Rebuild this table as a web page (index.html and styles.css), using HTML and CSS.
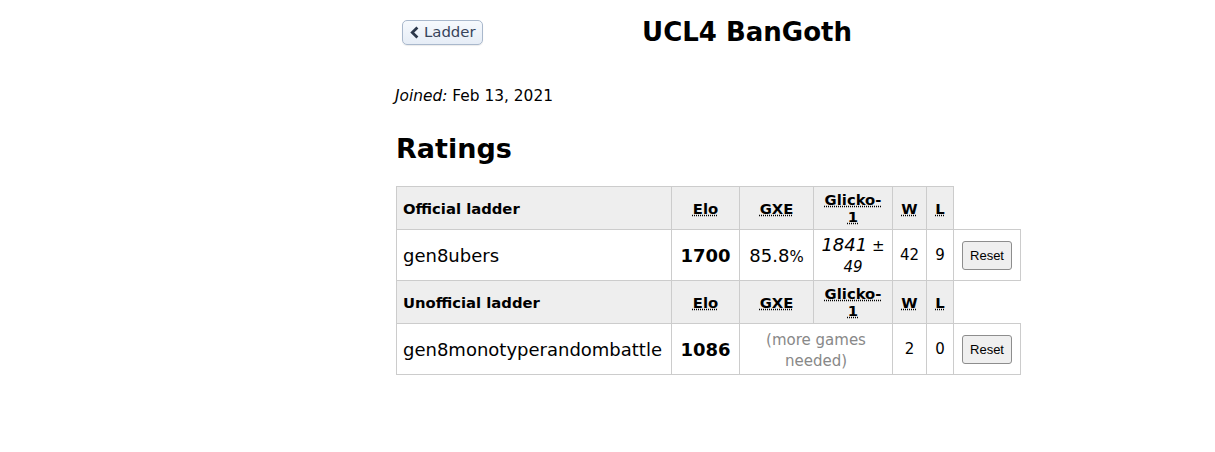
FILE: index.html
```html
<!DOCTYPE html>
<html lang="en">
<head>
<meta charset="utf-8">
<title>UCL4 BanGoth</title>
<link rel="stylesheet" href="styles.css">
</head>
<body>
<div class="page">
  <div class="topbar">
    <div class="topbar-left">
      <button class="back-btn" type="button"><svg class="chev" width="10" height="13" viewBox="0 0 10 13"><path d="M7.4 0.4 L9.4 2.4 L5.2 6.5 L9.4 10.6 L7.4 12.6 L1.3 6.5 Z" fill="#2b374a"/></svg><span>Ladder</span></button>
    </div>
    <h1 class="title">UCL4 BanGoth</h1>
    <div class="topbar-right"></div>
  </div>
  <p class="joined"><em>Joined:</em> Feb 13, 2021</p>
  <h2 class="section">Ratings</h2>
  <table class="ratings">
    <colgroup>
      <col class="c-name"><col class="c-elo"><col class="c-gxe"><col class="c-glicko"><col class="c-w"><col class="c-l"><col class="c-reset">
    </colgroup>
    <tr class="hdr">
      <th class="name">Official ladder</th>
      <th><abbr title="Elo rating">Elo</abbr></th>
      <th><abbr title="user's percentage chance of winning a random battle">GXE</abbr></th>
      <th><abbr title="Glicko-1 rating: rating±deviation">Glicko-1</abbr></th>
      <th><abbr title="Wins">W</abbr></th>
      <th><abbr title="Losses">L</abbr></th>
    </tr>
    <tr class="row">
      <td class="name">gen8ubers</td>
      <td><strong>1700</strong></td>
      <td>85.8<small>%</small></td>
      <td><em>1841<small> ± 49</small></em></td>
      <td class="count">42</td>
      <td class="count">9</td>
      <td><button class="reset-btn" type="button">Reset</button></td>
    </tr>
    <tr class="hdr">
      <th class="name">Unofficial ladder</th>
      <th><abbr title="Elo rating">Elo</abbr></th>
      <th><abbr title="user's percentage chance of winning a random battle">GXE</abbr></th>
      <th><abbr title="Glicko-1 rating: rating±deviation">Glicko-1</abbr></th>
      <th><abbr title="Wins">W</abbr></th>
      <th><abbr title="Losses">L</abbr></th>
    </tr>
    <tr class="row">
      <td class="name">gen8monotyperandombattle</td>
      <td><strong>1086</strong></td>
      <td colspan="2" class="pending"><small>(more games needed)</small></td>
      <td class="count">2</td>
      <td class="count">0</td>
      <td><button class="reset-btn" type="button">Reset</button></td>
    </tr>
  </table>
</div>
</body>
</html>
```

FILE: styles.css
```css
html, body {
  margin: 0;
  padding: 0;
  background: #ffffff;
}

body {
  font-family: "DejaVu Sans", Verdana, sans-serif;
  color: #000000;
}

.page {
  margin-left: 396px;
  width: 702px;
  padding-top: 17px;
}

.topbar {
  display: grid;
  grid-template-columns: 1fr auto 1fr;
  align-items: start;
}

.topbar-left {
  padding-left: 6px;
  padding-top: 3px;
}

.back-btn {
  display: inline-flex;
  align-items: center;
  gap: 5px;
  height: 25px;
  margin: 0;
  padding: 0 6px 0 6px;
  border: 1px solid #a9b8cc;
  border-radius: 5px;
  background: linear-gradient(#f6f9fd, #e6edf6);
  color: #37445a;
  font-family: "DejaVu Sans", Verdana, sans-serif;
  font-size: 14.9px;
  line-height: 17px;
  cursor: pointer;
  box-shadow: 0 1px 1px rgba(0, 0, 0, 0.08);
}

.back-btn .chev {
  display: block;
}

.title {
  margin: 0;
  font-size: 26px;
  line-height: 30px;
  font-weight: bold;
  text-align: center;
}

.joined {
  margin: 40px 0 0 -1px;
  font-size: 15.4px;
  line-height: 18px;
}

.section {
  margin: 28px 0 0 0;
  font-size: 27px;
  line-height: 32px;
  font-weight: bold;
}

.ratings {
  margin-top: 21px;
  border-collapse: collapse;
  table-layout: fixed;
  width: 625px;
}

.c-name { width: 275px; }
.c-elo { width: 68px; }
.c-gxe { width: 74px; }
.c-glicko { width: 79px; }
.c-w { width: 34px; }
.c-l { width: 27px; }
.c-reset { width: 67px; }

.ratings th,
.ratings td {
  border: 1px solid #cccccc;
  padding: 4px 6px;
  text-align: center;
  vertical-align: middle;
}

.ratings th {
  background: #eeeeee;
  font-size: 14.8px;
  font-weight: bold;
  line-height: 17px;
  height: 34px;
}

.ratings td {
  font-size: 18px;
  line-height: 21px;
  height: 42px;
}

.ratings .name {
  text-align: left;
}

.ratings abbr {
  text-decoration: underline dotted;
  text-underline-offset: 1px;
  cursor: help;
}

.ratings td small {
  font-size: 15px;
  line-height: 16px;
}

.ratings td.count {
  font-size: 15px;
}

.pending {
  color: #888888;
}

.reset-btn {
  margin: 0;
  padding: 6px 7px;
  border: 1px solid #8d8d8d;
  border-radius: 3px;
  background: #efefef;
  color: #000000;
  font-family: "Liberation Sans", Arial, sans-serif;
  font-size: 13px;
  line-height: 15px;
  cursor: pointer;
}
```
